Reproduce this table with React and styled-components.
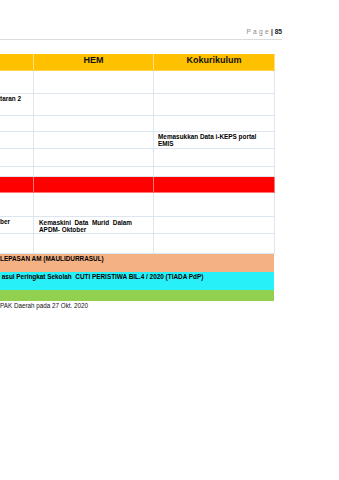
import React from 'react';
import styled, { createGlobalStyle } from 'styled-components';

const GlobalStyle = createGlobalStyle`
  html, body {
    margin: 0;
    padding: 0;
    background: #ffffff;
  }
  body {
    font-family: "Liberation Sans", Arial, sans-serif;
    color: #000;
  }
`;

const Page = styled.div`
  width: 339px;
  height: 480px;
  overflow: hidden;
  background: #fff;
`;

const PageHeader = styled.div`
  width: 282px;
  height: 40px;
  box-sizing: border-box;
  display: flex;
  justify-content: flex-end;
  align-items: flex-end;
  padding-bottom: 3px;
  border-bottom: 1px solid #dcdcdc;
  font-size: 6.6px;
  line-height: 8px;
`;

const PageWord = styled.span`
  color: #8a8a8a;
  letter-spacing: 2.3px;
`;

const PageNum = styled.span`
  font-weight: bold;
  color: #222;
`;

const Table = styled.div`
  margin-top: 14px;
  width: 275px;
  display: flex;
  flex-direction: column;
`;

const Row = styled.div`
  display: grid;
  grid-template-columns: 34px 120px 121px;
  height: ${(p) => p.$h}px;
  box-sizing: border-box;
  background: ${(p) => p.$bg || 'transparent'};
  border-bottom: 1px solid ${(p) => p.$line || '#dde6ef'};
`;

const SpanRow = styled.div`
  width: 274px;
  height: ${(p) => p.$h}px;
  box-sizing: border-box;
  background: ${(p) => p.$bg};
  font-size: 6.4px;
  line-height: 8px;
  font-weight: bold;
  padding-top: 1px;
  white-space: nowrap;
  overflow: visible;
`;

const Cell = styled.div`
  box-sizing: border-box;
  border-right: 1px solid ${(p) => p.$line || '#dde6ef'};
  font-size: 6.4px;
  line-height: 7.4px;
  font-weight: bold;
  padding: ${(p) => p.$pad || '1px 2px 0 4px'};
  text-align: ${(p) => (p.$justify ? 'justify' : 'left')};
  overflow: hidden;
`;

const HeadCell = styled.div`
  box-sizing: border-box;
  border-right: 1px solid rgba(255, 255, 255, 0.5);
  font-size: 9px;
  line-height: 11px;
  font-weight: bold;
  text-align: center;
  padding-top: 1px;
  color: #111;
`;

const Footer = styled.div`
  font-size: 6.3px;
  line-height: 8px;
  padding-top: 1px;
  color: #111;
`;

const rows = [
  { h: 23 },
  { h: 22, a: 'taran 2' },
  { h: 16 },
  { h: 17, c: 'Memasukkan Data i-KEPS portal EMIS' },
  { h: 18 },
  { h: 10 },
  { h: 16, bg: '#ff0000', line: 'rgba(255,255,255,0.45)' },
  { h: 24 },
  { h: 17, a: 'ber', b: 'Kemaskini Data Murid Dalam APDM- Oktober' },
  { h: 20 },
];

export default function App() {
  return (
    <Page>
      <GlobalStyle />
      <PageHeader>
        <PageWord>Page</PageWord>
        <PageNum>| 85</PageNum>
      </PageHeader>
      <Table>
        <Row $h={17} $bg="#ffc000" $line="#ffd24d">
          <HeadCell />
          <HeadCell>HEM</HeadCell>
          <HeadCell>Kokurikulum</HeadCell>
        </Row>
        {rows.map((r, i) => (
          <Row key={i} $h={r.h} $bg={r.bg} $line={r.line}>
            <Cell $line={r.line} $pad="1px 0 0 0">{r.a}</Cell>
            <Cell $line={r.line} $justify $pad="2px 21px 0 5px">{r.b}</Cell>
            <Cell $line={r.line}>{r.c}</Cell>
          </Row>
        ))}
        <SpanRow $h={18} $bg="#f4b183">LEPASAN AM (MAULIDURRASUL)</SpanRow>
        <SpanRow $h={18} $bg="#27f0f8">
          &nbsp;asul Peringkat Sekolah&nbsp; CUTI PERISTIWA BIL.4 / 2020 (TIADA PdP)
        </SpanRow>
        <SpanRow $h={11} $bg="#92d050" />
      </Table>
      <Footer>PAK Daerah pada 27 Okt. 2020</Footer>
    </Page>
  );
}
